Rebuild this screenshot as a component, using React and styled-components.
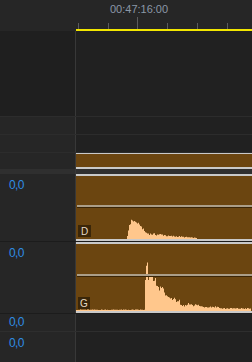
import styled, { createGlobalStyle } from "styled-components"

const GlobalStyle = createGlobalStyle`
    html, body {
        margin: 0;
        padding: 0;
        background: #212121;
        font-family: "Liberation Sans", Arial, sans-serif;
    }
`;

const Frame = styled.div`
    width: 252px;
    height: 362px;
    display: flex;
    flex-direction: column;
    overflow: hidden;
    background: #212121;
`;

const Header = styled.div`
    display: grid;
    grid-template-columns: 76px 1fr;
    height: 31px;
    background: #262626;
`;

const Ruler = styled.div`
    display: flex;
    flex-direction: column;
    border-bottom: 2px solid #f2e600;
`;

const TimeLabel = styled.div`
    padding: 3px 0 1px 34px;
    line-height: 13px;
    font-size: 11px;
    color: #8b98a7;
`;

const Row = styled.div`
    display: flex;
    height: ${p => p.$h}px;
    flex: ${p => (p.$grow ? 1 : "none")};
    border-bottom: ${p => (p.$line ? `1px solid ${p.$line}` : "none")};
    background: ${p => p.$bg || "#212121"};
`;

const Head = styled.div`
    width: 76px;
    flex: none;
    box-sizing: border-box;
    border-right: 1px solid #383838;
    background: ${p => p.$bg || "#262626"};
    padding: ${p => p.$pad ?? 4}px 0 0 9px;
`;

const Value = styled.span`
    display: block;
    font-size: 12px;
    line-height: 14px;
    letter-spacing: -0.6px;
    color: #2f8de4;
`;

const Lane = styled.div`
    flex: 1;
    min-width: 0;
    display: flex;
`;

const Clip = styled.div`
    position: relative;
    flex: 1;
    box-sizing: border-box;
    background: #6b4510;
    border-top: ${p => p.$top}px solid #c9c9c9;
    border-bottom: 2px solid #c9c9c9;
    overflow: hidden;
`;

const Keyline = styled.div`
    position: absolute;
    left: 1px;
    right: 0;
    top: ${p => p.$y}px;
    height: 2px;
    background: #ab9e88;
    border-bottom: 1px solid #3a2507;
    z-index: 2;
`;

const Badge = styled.span`
    position: absolute;
    left: 2px;
    bottom: 2px;
    width: ${p => p.$w}px;
    height: 12px;
    display: flex;
    align-items: center;
    justify-content: center;
    background: #3a2609;
    color: #e6dac6;
    font-size: 10px;
    z-index: 3;
`;

const Wave = styled.svg`
    position: absolute;
    left: 0;
    bottom: 0;
    width: 175px;
    height: 60px;
    z-index: 1;
`;

const waveD = [
    [127, 0], [128, 3], [129, 9], [130, 14], [131, 16], [132, 18], [133, 19], [134, 18],
    [136, 17], [138, 16], [139, 15], [140, 13], [141, 14], [142, 12], [143, 11], [144, 9],
    [145, 8], [146, 7], [147, 6], [151, 5], [165, 4], [168, 3], [180, 2.4], [190, 1.6], [197, 1], [198, 0],
];

const waveG = [
    [77, 1.2], [145, 1.2], [146, 30], [147, 45], [148, 48], [149, 30], [150, 33], [151, 35],
    [153, 35], [154, 31], [155, 30], [156, 32], [157, 26], [158, 24], [159, 25], [160, 22],
    [161, 23], [162, 22], [163, 24], [164, 22], [165, 17], [166, 16], [167, 15], [168, 14],
    [169, 15], [170, 13], [175, 12], [176, 10.5], [180, 10], [181, 5], [186, 5], [187, 7],
    [193, 7], [194, 6], [200, 5.5], [201, 4.5], [220, 4], [221, 2.6], [252, 2.4],
];

function envelope(keys, X) {
    if (X < keys[0][0] || X > keys[keys.length - 1][0]) return 0;
    for (let i = 0; i < keys.length - 1; i++) {
        const [x0, h0] = keys[i];
        const [x1, h1] = keys[i + 1];
        if (X >= x0 && X <= x1) {
            return x1 === x0 ? h1 : h0 + ((h1 - h0) * (X - x0)) / (x1 - x0);
        }
    }
    return 0;
}

function noise(x, seed) {
    const v = Math.sin(x * 12.9898 + seed * 78.233) * 43758.5453;
    return v - Math.floor(v);
}

function wavePath(keys, seed) {
    let d = "M0,60";
    for (let lx = 0; lx < 175; lx++) {
        const base = envelope(keys, lx + 77);
        const h = base > 0 ? Math.max(0, base + (noise(lx, seed) - 0.5) * Math.min(3, base * 0.5)) : 0;
        d += ` L${lx},${(60 - h).toFixed(1)} L${lx + 1},${(60 - h).toFixed(1)}`;
    }
    return d + " L175,60 Z";
}

function Waveform({ keys, seed }) {
    return (
        <Wave viewBox="0 0 175 60" preserveAspectRatio="none">
            <path d={wavePath(keys, seed)} fill="#ffc78c" />
        </Wave>
    );
}

const ticks = [2, 32, 61, 91, 121, 151];

export default function App() {
    return (
        <Frame>
            <GlobalStyle />
            <Header>
                <div />
                <Ruler>
                    <TimeLabel>00:47:16:00</TimeLabel>
                    <svg width="176" height="12" viewBox="0 0 176 12">
                        {ticks.map(t => (
                            <line key={t} x1={t + 0.5} x2={t + 0.5} y1={t === 61 ? 0 : 6} y2="12" stroke="#5c5c5c" strokeWidth="1" />
                        ))}
                    </svg>
                </Ruler>
            </Header>

            <Row $h={85} $line="#2c2c2c">
                <Head $bg="#1f1f1f" />
                <Lane />
            </Row>
            <Row $h={17} $line="#2c2c2c">
                <Head />
                <Lane />
            </Row>
            <Row $h={17} $line="#2c2c2c">
                <Head />
                <Lane />
            </Row>
            <Row $h={16}>
                <Head />
                <Lane>
                    <Clip $top={1} />
                </Lane>
            </Row>
            <Row $h={5} $bg="#2f2f2f">
                <Head $bg="#2f2f2f" />
                <Lane />
            </Row>
            <Row $h={67} $line="#1c1c1c">
                <Head>
                    <Value>0,0</Value>
                </Head>
                <Lane>
                    <Clip $top={2}>
                        <Keyline $y={29} />
                        <Waveform keys={waveD} seed={1} />
                        <Badge $w={13}>D</Badge>
                    </Clip>
                </Lane>
            </Row>
            <Row $h={71} $line="#1c1c1c">
                <Head>
                    <Value>0,0</Value>
                </Head>
                <Lane>
                    <Clip $top={2}>
                        <Keyline $y={30} />
                        <Waveform keys={waveG} seed={2} />
                        <Badge $w={12}>G</Badge>
                    </Clip>
                </Lane>
            </Row>
            <Row $h={17} $line="#2e2e2e">
                <Head $pad={1}>
                    <Value>0,0</Value>
                </Head>
                <Lane />
            </Row>
            <Row $grow>
                <Head>
                    <Value>0,0</Value>
                </Head>
                <Lane />
            </Row>
        </Frame>
    )
}
